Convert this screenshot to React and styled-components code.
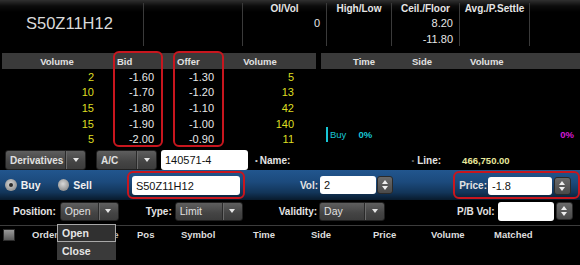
import React from 'react';
import styled, { createGlobalStyle } from 'styled-components';

const Global = createGlobalStyle`
  html, body { margin: 0; padding: 0; background: #000; }
  body { width: 580px; height: 265px; overflow: hidden; }
`;

const FONT = '"Liberation Sans", Arial, Helvetica, sans-serif';

const Page = styled.div`
  position: relative;
  width: 580px;
  height: 265px;
  overflow: hidden;
  background: #000;
  font-family: ${FONT};
  color: #e4e4e4;
`;

/* ---------- top info strip ---------- */
const TopInfo = styled.div`
  display: flex;
  height: 48px;
  background: linear-gradient(#303030 0, #0c0c0c 6px, #000 12px);
`;
const InfoCell = styled.div`
  box-sizing: border-box;
  width: ${p => p.$w}px;
  margin: 3px 0 2px;
  border-left: ${p => (p.$first ? 'none' : '1px solid #3a3a3a')};
  display: flex;
  flex-direction: column;
`;
const SymbolTitle = styled.div`
  font-size: 16.5px;
  line-height: 40px;
  padding-left: 26px;
  color: #dadada;
`;
const StatHead = styled.div`
  font-size: 10px;
  font-weight: bold;
  line-height: 12px;
  text-align: center;
  color: #e6e6e6;
`;
const StatValue = styled.div`
  font-size: 11px;
  line-height: 16px;
  text-align: right;
  padding-right: 6px;
  color: #e6e6e6;
`;

/* ---------- order book + trades ---------- */
const BookArea = styled.div`
  position: relative;
  display: flex;
  margin-top: 5px;
`;
const BookTable = styled.div`
  width: 314px;
  margin-left: 2px;
`;
const BookGrid = styled.div`
  display: grid;
  grid-template-columns: 98px 60px 60px 80px 16px;
  height: ${p => p.$h}px;
  align-items: center;
  background: ${p => p.$bg || 'transparent'};
`;
const HeadCell = styled.div`
  font-size: 9.5px;
  font-weight: bold;
  color: #e2e2e2;
  text-align: ${p => p.$align || 'left'};
  padding-left: ${p => p.$pl || 0}px;
`;
const BookCell = styled.div`
  font-size: 11px;
  text-align: right;
  padding-right: 6px;
  color: ${p => p.$color};
`;
const TradePanel = styled.div`
  flex: 1;
  margin-left: 5px;
  display: flex;
  flex-direction: column;
`;
const TradeHead = styled.div`
  display: flex;
  align-items: center;
  height: 16px;
  padding-left: 32px;
  background: #3a3a3a;
`;
const TradeHeadCell = styled(HeadCell)`
  width: ${p => p.$w}px;
`;
const TradeBody = styled.div`
  height: 78px;
  display: flex;
  flex-direction: column;
  justify-content: flex-end;
  padding-bottom: 5px;
  box-sizing: border-box;
`;
const PowerRow = styled.div`
  display: flex;
  align-items: center;
  height: 15px;
  margin-left: 5px;
  padding-right: 6px;
`;
const BuyMark = styled.div`
  height: 15px;
  border-left: 2px solid #18c6d6;
  padding-left: 2px;
  font-size: 9.5px;
  line-height: 15px;
  color: #18c6d6;
`;
const Pct = styled.div`
  font-size: 9.5px;
  font-weight: bold;
  color: ${p => p.$color};
  margin-left: ${p => p.$ml || '0'};
`;
const RedFrame = styled.div`
  position: absolute;
  top: -2px;
  left: ${p => p.$left}px;
  width: ${p => p.$w}px;
  height: 96px;
  box-sizing: border-box;
  border: 2px solid #c8161e;
  border-radius: 6px;
  pointer-events: none;
`;

/* ---------- shared widgets ---------- */
const Dropdown = styled.div`
  box-sizing: border-box;
  display: flex;
  align-items: stretch;
  width: ${p => p.$w}px;
  height: ${p => p.$h || 19}px;
  margin-left: ${p => p.$ml || 0}px;
  border: 1px solid #202020;
  border-radius: 3px;
  background: linear-gradient(#5e5e5e, #444 60%, #3c3c3c);
  overflow: hidden;
`;
const DropLabel = styled.div`
  flex: 1;
  display: flex;
  align-items: center;
  padding-left: 4px;
  font-size: ${p => (p.$bold ? '10px' : '10.5px')};
  font-weight: ${p => (p.$bold ? 'bold' : 'normal')};
  color: #e0e0e0;
`;
const DropButton = styled.div`
  width: 19px;
  display: flex;
  align-items: center;
  justify-content: center;
  border-left: 1px solid #2a2a2a;
  box-shadow: inset 1px 0 0 #6a6a6a;
`;
const Caret = styled.div`
  width: 0;
  height: 0;
  border-left: 3.5px solid transparent;
  border-right: 3.5px solid transparent;
  border-top: 4px solid #e6e6e6;
`;
const TextBox = styled.div`
  box-sizing: border-box;
  width: ${p => p.$w}px;
  height: ${p => p.$h || 18}px;
  margin-left: ${p => p.$ml || 0}px;
  background: #fff;
  border-radius: 3px;
  padding-left: 4px;
  display: flex;
  align-items: center;
  font-size: 11px;
  color: #111;
`;
const Spinner = styled.div`
  box-sizing: border-box;
  width: 17px;
  height: 18px;
  margin-left: ${p => p.$ml || 0}px;
  border-radius: 3px;
  background: linear-gradient(#6a6a6a, #4a4a4a);
  border: 1px solid #2a2a2a;
  display: flex;
  flex-direction: column;
  align-items: center;
  justify-content: center;
  gap: 2px;
`;
const Tri = styled.div`
  width: 0;
  height: 0;
  border-left: 3.5px solid transparent;
  border-right: 3.5px solid transparent;
  ${p => (p.$up ? 'border-bottom: 4px solid #eee;' : 'border-top: 4px solid #eee;')}
`;
const Label = styled.div`
  font-size: 10px;
  font-weight: bold;
  color: ${p => p.$color || '#e4e4e4'};
  margin-left: ${p => p.$ml || 0}px;
  white-space: nowrap;
`;

/* ---------- account row ---------- */
const AccountRow = styled.div`
  display: flex;
  align-items: center;
  height: 20px;
  margin-top: 3px;
  padding-left: 5px;
`;
const Bullet = styled.span`
  font-size: 8px;
  color: ${p => p.$color || '#ccc'};
  margin-left: ${p => p.$ml || 0}px;
  margin-right: 2px;
`;
const CreditValue = styled.div`
  font-size: 9.5px;
  font-weight: bold;
  color: #e8e89c;
  margin-left: 21px;
`;

/* ---------- blue order bar ---------- */
const OrderBar = styled.div`
  display: flex;
  align-items: center;
  height: 30px;
  padding-left: 5px;
  background: linear-gradient(#22568e 0%, #1c4a7c 40%, #123559 75%, #081a2c 100%);
`;
const Radio = styled.div`
  box-sizing: border-box;
  width: 12px;
  height: 12px;
  border-radius: 50%;
  margin-left: ${p => p.$ml || 0}px;
  background: radial-gradient(circle at 45% 40%, #d8d8d8, #8a8a8a 80%);
  display: flex;
  align-items: center;
  justify-content: center;
  &::after {
    content: '';
    width: 4px;
    height: 4px;
    border-radius: 50%;
    background: ${p => (p.$on ? '#2a2a2a' : 'transparent')};
  }
`;
const RadioText = styled.div`
  font-size: 10.5px;
  font-weight: bold;
  color: #f0f0f0;
  margin-left: 4px;
`;
const Highlight = styled.div`
  box-sizing: border-box;
  display: flex;
  align-items: center;
  height: 28px;
  margin-left: ${p => p.$ml || 0}px;
  padding: 1px ${p => p.$pr || 3}px 0 ${p => p.$pl || 3}px;
  border: 2px solid #c8161e;
  border-radius: 6px;
`;

/* ---------- options row ---------- */
const OptionsRow = styled.div`
  display: flex;
  align-items: center;
  height: 22px;
  padding-left: 13px;
`;

/* ---------- orders header ---------- */
const OrdersHead = styled.div`
  display: grid;
  grid-template-columns: 29px 65px 40px 44px 72px 58px 62px 58px 63px 1fr;
  align-items: center;
  height: 17px;
  margin-top: 3px;
  padding-left: 3px;
  border-top: 1px solid #3c3c3c;
`;
const CheckBox = styled.div`
  box-sizing: border-box;
  width: 12px;
  height: 12px;
  background: linear-gradient(#9a9a9a, #5a5a5a);
  border: 1px solid #2c2c2c;
`;
const ColTitle = styled.div`
  font-size: 9.5px;
  font-weight: bold;
  color: #dedede;
`;

/* ---------- open dropdown menu ---------- */
const Menu = styled.div`
  position: absolute;
  left: 57px;
  top: 224px;
  width: 59px;
  background: #3a3a3a;
  box-shadow: 0 1px 3px rgba(0, 0, 0, 0.7);
`;
const MenuItem = styled.div`
  box-sizing: border-box;
  height: 18px;
  display: flex;
  align-items: center;
  padding-left: ${p => (p.$active ? 4 : 5)}px;
  font-size: 10.5px;
  font-weight: bold;
  color: #e6e6e6;
  border: ${p => (p.$active ? '1px solid #a8a8a8' : 'none')};
  background: ${p => (p.$active ? '#303030' : 'transparent')};
`;

const stats = [
  { w: 84, head: 'OI/Vol', values: ['0'] },
  { w: 65, head: 'High/Low', values: [] },
  { w: 68, head: 'Ceil./Floor', values: ['8.20', '-11.80'] },
  { w: 70, head: 'Avg./P.Settle', values: [] },
];

const book = [
  ['2', '-1.60', '-1.30', '5'],
  ['10', '-1.70', '-1.20', '13'],
  ['15', '-1.80', '-1.10', '42'],
  ['15', '-1.90', '-1.00', '140'],
  ['5', '-2.00', '-0.90', '11'],
];

const Spin = ({ ml }) => (
  <Spinner $ml={ml}>
    <Tri $up />
    <Tri />
  </Spinner>
);

const Select = ({ w, ml, h, label, bold }) => (
  <Dropdown $w={w} $ml={ml} $h={h}>
    <DropLabel $bold={bold}>{label}</DropLabel>
    <DropButton>
      <Caret />
    </DropButton>
  </Dropdown>
);

export default function App() {
  return (
    <Page>
      <Global />
      <TopInfo>
        <InfoCell $w={143} $first>
          <SymbolTitle>S50Z11H12</SymbolTitle>
        </InfoCell>
        <InfoCell $w={99} />
        {stats.map(s => (
          <InfoCell key={s.head} $w={s.w}>
            <StatHead>{s.head}</StatHead>
            {s.values.map(v => (
              <StatValue key={v}>{v}</StatValue>
            ))}
          </InfoCell>
        ))}
        <InfoCell $w={51} />
      </TopInfo>

      <BookArea>
        <BookTable>
          <BookGrid $h={16} $bg="#3a3a3a">
            <HeadCell $align="center" $pl={12}>Volume</HeadCell>
            <HeadCell $pl={17}>Bid</HeadCell>
            <HeadCell $pl={17}>Offer</HeadCell>
            <HeadCell $align="center" $pl={0}>Volume</HeadCell>
            <div />
          </BookGrid>
          {book.map((r, i) => (
            <BookGrid key={i} $h={15.6}>
              <BookCell $color="#dede22">{r[0]}</BookCell>
              <BookCell $color="#e8e8e8">{r[1]}</BookCell>
              <BookCell $color="#e8e8e8">{r[2]}</BookCell>
              <BookCell $color="#dede22">{r[3]}</BookCell>
              <div />
            </BookGrid>
          ))}
        </BookTable>
        <TradePanel>
          <TradeHead>
            <TradeHeadCell $w={59}>Time</TradeHeadCell>
            <TradeHeadCell $w={58}>Side</TradeHeadCell>
            <TradeHeadCell $w={60}>Volume</TradeHeadCell>
          </TradeHead>
          <TradeBody>
            <PowerRow>
              <BuyMark>Buy</BuyMark>
              <Pct $color="#18c6d6" $ml="12px">0%</Pct>
              <Pct $color="#d41ad4" $ml="auto">0%</Pct>
            </PowerRow>
          </TradeBody>
        </TradePanel>
        <RedFrame $left={113} $w={50} />
        <RedFrame $left={173} $w={51} />
      </BookArea>

      <AccountRow>
        <Select w={81} h={20} label="Derivatives" bold />
        <Select w={61} h={20} ml={10} label="A/C" bold />
        <TextBox $w={87} $h={20} $ml={4}>140571-4</TextBox>
        <Bullet $ml={7}>•</Bullet>
        <Label>Name:</Label>
        <Bullet $ml={121} $color="#666">•</Bullet>
        <Label $ml={1}>Line:</Label>
        <CreditValue>466,750.00</CreditValue>
      </AccountRow>

      <OrderBar>
        <Radio $on />
        <RadioText>Buy</RadioText>
        <Radio $ml={17} />
        <RadioText>Sell</RadioText>
        <Highlight $ml={35}>
          <TextBox $w={108} $h={19}>S50Z11H12</TextBox>
        </Highlight>
        <Label $ml={55}>Vol:</Label>
        <TextBox $w={57} $ml={2}>2</TextBox>
        <Spin ml={1} />
        <Highlight $ml={60} $pl={4} $pr={7}>
          <Label>Price:</Label>
          <TextBox $w={64} $ml={1}>-1.8</TextBox>
          <Spin ml={2} />
        </Highlight>
      </OrderBar>

      <OptionsRow>
        <Label>Position:</Label>
        <Select w={59} ml={4} label="Open" />
        <Label $ml={27}>Type:</Label>
        <Select w={68} ml={3} label="Limit" />
        <Label $ml={36}>Validity:</Label>
        <Select w={66} ml={2} label="Day" />
        <Label $ml={72}>P/B Vol:</Label>
        <TextBox $w={56} $h={19} $ml={3} />
        <Spin ml={2} />
      </OptionsRow>

      <OrdersHead>
        <CheckBox />
        <ColTitle>Order</ColTitle>
        <ColTitle>Type</ColTitle>
        <ColTitle>Pos</ColTitle>
        <ColTitle>Symbol</ColTitle>
        <ColTitle>Time</ColTitle>
        <ColTitle>Side</ColTitle>
        <ColTitle>Price</ColTitle>
        <ColTitle>Volume</ColTitle>
        <ColTitle>Matched</ColTitle>
      </OrdersHead>

      <Menu>
        <MenuItem $active>Open</MenuItem>
        <MenuItem>Close</MenuItem>
      </Menu>
    </Page>
  );
}
